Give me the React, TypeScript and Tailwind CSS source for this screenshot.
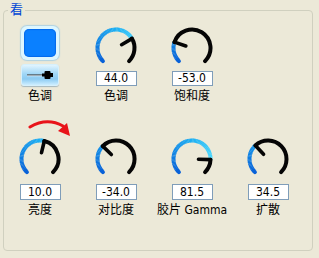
import React from 'react';

const BLUE_STOPS: [number, number[]][] = [
  [0, [8, 96, 216]],
  [0.5, [28, 176, 244]],
  [0.85, [80, 220, 255]],
  [1, [110, 232, 255]],
];

function blueAt(f: number) {
  for (let i = 1; i < BLUE_STOPS.length; i++) {
    const [f1, c1] = BLUE_STOPS[i];
    const [f0, c0] = BLUE_STOPS[i - 1];
    if (f <= f1) {
      const t = (f - f0) / (f1 - f0);
      const c = c0.map((v, k) => Math.round(v + (c1[k] - v) * t));
      return `rgb(${c[0]},${c[1]},${c[2]})`;
    }
  }
  return 'rgb(110,232,255)';
}

const CX = 22;
const CY = 22;
const R = 18.5;

function pt(a: number, r = R) {
  const rad = (a * Math.PI) / 180;
  return [CX + r * Math.cos(rad), CY - r * Math.sin(rad)];
}

// clockwise arc from angle a1 down to a2 (math degrees)
function arc(a1: number, a2: number) {
  const [x1, y1] = pt(a1);
  const [x2, y2] = pt(a2);
  const large = a1 - a2 > 180 ? 1 : 0;
  return `M ${x1.toFixed(2)} ${y1.toFixed(2)} A ${R} ${R} 0 ${large} 1 ${x2.toFixed(2)} ${y2.toFixed(2)}`;
}

function Knob({ angle }: { angle: number }) {
  const segs: React.ReactNode[] = [];
  const step = 4;
  for (let a = 225; a > angle; a -= step) {
    const end = Math.max(angle, a - step - 0.6);
    const f = (225 - (a - step / 2)) / 270;
    segs.push(
      <path key={a} d={arc(a, end)} stroke={blueAt(f)} strokeWidth={4} fill="none" strokeLinecap={a === 225 ? 'round' : 'butt'} />
    );
  }
  const [ix1, iy1] = pt(angle, 6.5);
  const [ix2, iy2] = pt(angle, R);
  return (
    <svg width="44" height="44" viewBox="0 0 44 44" className="block">
      {segs}
      <path d={arc(angle, -45)} stroke="#050505" strokeWidth={4} fill="none" strokeLinecap="round" />
      <line x1={ix1} y1={iy1} x2={ix2} y2={iy2} stroke="#050505" strokeWidth={3.6} strokeLinecap="round" />
    </svg>
  );
}

function ValueBox({ value, tall }: { value: string; tall?: boolean }) {
  return (
    <div
      className={`w-[41px] ${tall ? 'h-[16px] leading-[14px] mt-[3px]' : 'h-[15px] leading-[13px] mt-[1px]'} border border-[#7F9DB9] bg-white text-center text-[12px] text-black`}
    >
      {value}
    </div>
  );
}

function Label({ children }: { children: React.ReactNode }) {
  return <div className="mt-[3px] text-[12px] leading-[14px] text-black whitespace-nowrap">{children}</div>;
}

function KnobCell({ angle, value, label, tall }: { angle: number; value: string; label: React.ReactNode; tall?: boolean }) {
  return (
    <div className="flex flex-col items-center">
      <Knob angle={angle} />
      <ValueBox value={value} tall={tall} />
      <Label>{label}</Label>
    </div>
  );
}

function SwatchCell() {
  return (
    <div className="flex flex-col items-center">
      <div className="w-[38px] h-[34px] rounded-[6px] bg-[#DDF6FF] p-[3px] shadow-[0_0_1px_1px_rgba(150,200,230,0.7)]">
        <div className="w-full h-full rounded-[5px] bg-[#0A80FF] shadow-[inset_0_0_1px_1px_rgba(0,90,220,0.6)]" />
      </div>
      <div className="mt-[4px] w-[38px] h-[22px] rounded-[3px] border border-[#D6F0FC] bg-[linear-gradient(#E2F5FF,#9FD6F6_45%,#8CCBF2_70%,#CDEEFF)] shadow-[0_1px_1px_rgba(120,150,170,0.6)] flex items-center justify-center">
        <svg width="28" height="10" viewBox="0 0 28 10" className="block">
          <line x1="1" y1="5" x2="17" y2="5" stroke="#404040" strokeWidth="1.2" />
          <line x1="1" y1="5.8" x2="17" y2="5.8" stroke="#FFFFFF" strokeWidth="0.8" opacity="0.7" />
          <rect x="16" y="3.5" width="3" height="3" fill="#000" />
          <rect x="18.5" y="1" width="6" height="8" rx="1" fill="#000" />
          <rect x="24" y="3" width="3" height="4" fill="#000" />
        </svg>
      </div>
      <Label>色调</Label>
    </div>
  );
}

function RedArrow() {
  return (
    <svg width="48" height="22" viewBox="0 0 48 22" className="absolute left-[25px] top-[-19px]">
      <path d="M 3 9 Q 20 -1 36 8" stroke="#E8141A" strokeWidth="3" fill="none" strokeLinecap="round" />
      <polygon points="43,18 31,13 40,5" fill="#E8141A" />
    </svg>
  );
}

export default function App() {
  return (
    <div className="w-[319px] h-[258px] bg-[#ECE9D8] pt-[10px] pl-[3px] font-['Liberation_Sans_Narrow','DejaVu_Sans_Condensed','Liberation_Sans','Noto_Sans_CJK_SC',sans-serif]">
      <div className="relative w-[310px] h-[241px] border border-[#D0D0BF] rounded-[4px]">
        <span className="absolute left-[4px] top-[-10px] px-[2px] bg-[#ECE9D8] text-[13px] leading-[15px] text-[#0046D5] font-['Noto_Sans_CJK_SC',sans-serif]">
          看
        </span>

        <div className="ml-[-2px] pt-[15px] grid grid-cols-[76px_76px_76px_76px]">
          <SwatchCell />
          <KnobCell angle={30.6} value="44.0" label="色调" />
          <KnobCell angle={161.5} value="-53.0" label="饱和度" />
        </div>

        <div className="ml-[-2px] mt-[34px] grid grid-cols-[76px_76px_76px_76px]">
          <div className="relative">
            <RedArrow />
            <KnobCell angle={76.5} value="10.0" label="亮度" tall />
          </div>
          <KnobCell angle={135.9} value="-34.0" label="对比度" tall />
          <KnobCell angle={-2} value="81.5" label={<span>胶片 Gamma</span>} tall />
          <KnobCell angle={133} value="34.5" label="扩散" tall />
        </div>
      </div>
    </div>
  );
}
